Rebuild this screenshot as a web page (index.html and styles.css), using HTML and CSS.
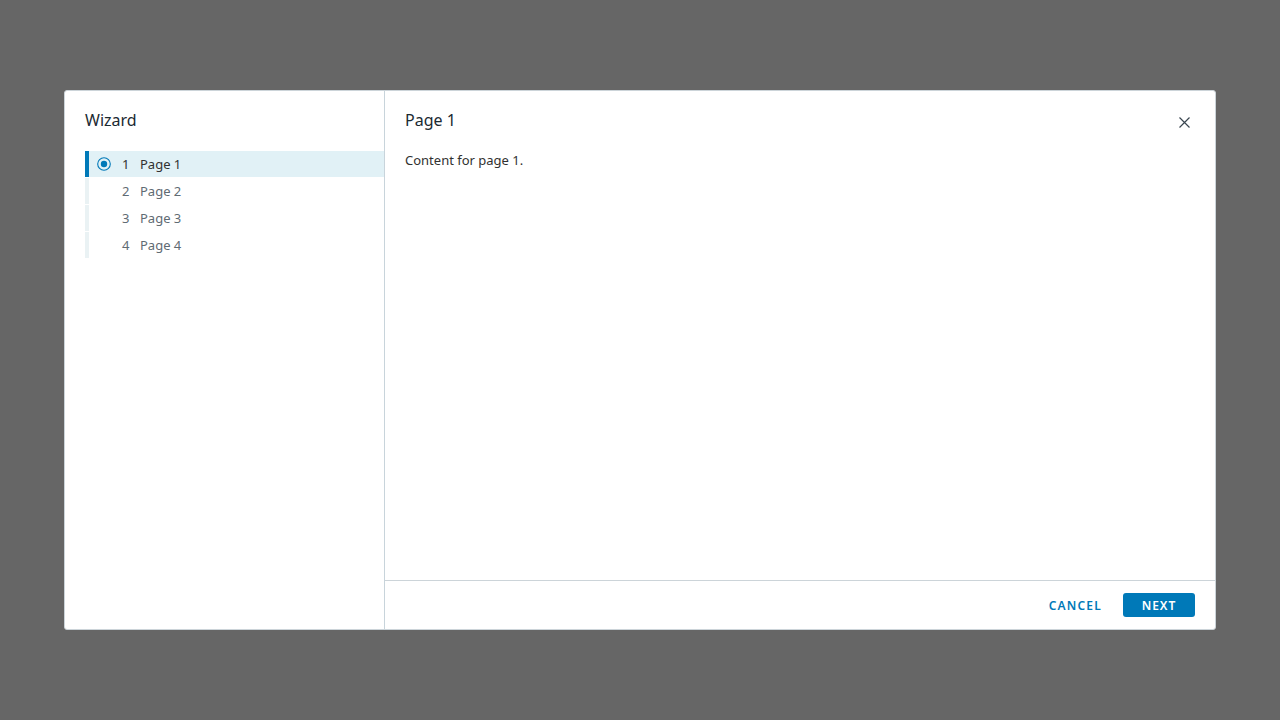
FILE: index.html
```html
<!DOCTYPE html>
<html>
<head>
<meta charset="utf-8">
<link rel="stylesheet" href="styles.css">
</head>
<body>
<div class="backdrop">
  <div class="modal">
    <nav class="stepnav">
      <h1 class="wiz-title">Wizard</h1>
      <ul class="steps">
        <li class="step active">
          <span class="step-icon"><svg width="14" height="14" viewBox="0 0 14 14"><circle cx="7" cy="7" r="6.3" fill="none" stroke="#0079b8" stroke-width="1.1"/><circle cx="7" cy="7" r="3.2" fill="#0079b8"/></svg></span>
          <span class="step-num">1</span><span class="step-label">Page 1</span>
        </li>
        <li class="step"><span class="step-icon"></span><span class="step-num">2</span><span class="step-label">Page 2</span></li>
        <li class="step"><span class="step-icon"></span><span class="step-num">3</span><span class="step-label">Page 3</span></li>
        <li class="step"><span class="step-icon"></span><span class="step-num">4</span><span class="step-label">Page 4</span></li>
      </ul>
    </nav>
    <section class="main">
      <header class="main-head">
        <h2 class="page-title">Page 1</h2>
        <button class="close" aria-label="Close"><svg width="11" height="11" viewBox="0 0 11 11"><path d="M0.5 0.5L10.5 10.5M10.5 0.5L0.5 10.5" stroke="#3a4650" stroke-width="1.2" fill="none"/></svg></button>
      </header>
      <div class="body">Content for page 1.</div>
      <footer class="foot">
        <button class="btn-link">CANCEL</button>
        <button class="btn-primary">NEXT</button>
      </footer>
    </section>
  </div>
</div>
</body>
</html>
```
FILE: styles.css
```css
* { box-sizing: border-box; }
html, body { margin: 0; padding: 0; }
body {
  width: 1280px; height: 720px;
  background: #666666;
  font-family: "Noto Sans", "Open Sans", sans-serif;
  color: #313131;
}
.backdrop {
  width: 1280px; height: 720px;
  display: flex; align-items: center; justify-content: center;
}
.modal {
  width: 1152px; height: 540px;
  background: #fff;
  border: 1px solid #ccd4d9;
  border-radius: 3px;
  display: flex;
}
.stepnav {
  width: 320px;
  border-right: 1px solid #c8d4db;
  padding: 0 0 0 20px;
}
.wiz-title {
  margin: 0;
  font-size: 16px;
  font-weight: 400;
  color: #1b2a32;
  height: 60px;
  line-height: 19px;
  padding-top: 20px;
}
.steps { list-style: none; margin: 0; padding: 0; }
.step {
  height: 26px;
  margin-bottom: 1px;
  display: flex; align-items: center;
  border-left: 4px solid #eaf2f4;
  font-size: 13px;
  line-height: 16px;
  padding-bottom: 1px;
  color: #5f6b73;
}
.step.active { background: #e1f1f6; border-left-color: #0079b8; color: #313131; }
.step-icon { width: 14px; height: 14px; margin-left: 8px; display: flex; }
.step-num { margin-left: 11px; width: 7px; text-align: center; }
.step-label { margin-left: 11px; }
.main { flex: 1; display: flex; flex-direction: column; }
.main-head {
  display: flex; justify-content: space-between; align-items: flex-start;
  padding: 20px 25px 0 20px;
  height: 59px;
}
.page-title { margin: 0; font-size: 16px; font-weight: 400; color: #1b2a32; line-height: 19px; }
.close { background: none; border: 0; padding: 0; margin-top: 6px; width: 11px; height: 11px; display: flex; }
.body { flex: 1; padding: 0 20px; font-size: 13px; color: #313131; line-height: 20px; }
.foot {
  height: 49px;
  border-top: 1px solid #ccd4d9;
  display: flex; justify-content: flex-end; align-items: center;
  padding: 0 20px;
  gap: 21px;
}
.btn-link {
  background: none; border: 0; padding: 0;
  color: #0079b8; font-family: inherit; font-size: 12px; font-weight: 600; letter-spacing: 1.2px;
}
.btn-primary {
  background: #0079b8; color: #fff; border: 0; border-radius: 3px;
  width: 72px; height: 24px;
  font-family: inherit; font-size: 12px; font-weight: 600; letter-spacing: 1px;
}
```
